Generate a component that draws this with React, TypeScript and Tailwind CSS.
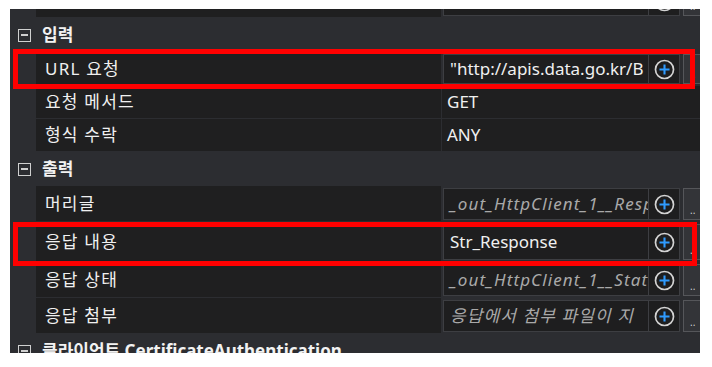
import React from 'react';

type Row =
  | { type: 'cat'; label: string; h: number }
  | {
      type: 'prop';
      label: string;
      value: string;
      h: number;
      boxed?: boolean;
      italic?: boolean;
    };

const rows: Row[] = [
  { type: 'prop', label: '사용자 정의', value: '', h: 34, boxed: true },
  { type: 'cat', label: '입력', h: 34 },
  { type: 'prop', label: 'URL 요청', value: '"http://apis.data.go.kr/B', h: 34, boxed: true },
  { type: 'prop', label: '요청 메서드', value: 'GET', h: 33 },
  { type: 'prop', label: '형식 수락', value: 'ANY', h: 33 },
  { type: 'cat', label: '출력', h: 34 },
  { type: 'prop', label: '머리글', value: '_out_HttpClient_1__Resp', h: 36, boxed: true, italic: true },
  { type: 'prop', label: '응답 내용', value: 'Str_Response', h: 40, boxed: true },
  { type: 'prop', label: '응답 상태', value: '_out_HttpClient_1__Stat', h: 36, boxed: true, italic: true },
  { type: 'prop', label: '응답 첨부', value: '응답에서 첨부 파일이 지', h: 36, boxed: true, italic: true },
  { type: 'cat', label: '클라이언트 CertificateAuthentication', h: 34 },
];

function PlusIcon() {
  return (
    <svg width="21" height="21" viewBox="0 0 20 20">
      <circle cx="10" cy="10" r="8.6" fill="none" stroke="#d4d4d4" strokeWidth="1.6" />
      <path d="M10 5.2v9.6M5.2 10h9.6" stroke="#2f9bff" strokeWidth="2" />
    </svg>
  );
}

function CollapseIcon() {
  return (
    <div className="w-[13px] h-[13px] border-[1.5px] border-[#d0d0d0] flex items-center justify-center shrink-0">
      <div className="w-[7px] h-[1.5px] bg-[#d0d0d0]" />
    </div>
  );
}

export default function App() {
  return (
    <div className="w-[712px] h-[367px] bg-white pt-[9px] pl-[10px] relative font-['Noto_Sans','Noto_Sans_CJK_KR',sans-serif]">
      <div className="w-[690px] h-[344px] bg-[#2c2d31] overflow-hidden flex flex-col">
        {rows.map((row, i) => {
          const first = i === 0;
          if (row.type === 'cat') {
            return (
              <div
                key={i}
                className="flex items-center pl-[8px] gap-[11px] shrink-0 text-[17px] font-bold text-[#f2f2f2] whitespace-nowrap"
                style={{ height: row.h }}
              >
                <CollapseIcon />
                <span>{row.label}</span>
              </div>
            );
          }
          return (
            <div
              key={i}
              className={`flex shrink-0 pl-[26px] ${first ? '-mt-[25px]' : ''}`}
              style={{ height: row.h }}
            >
              <div className="w-[405px] shrink-0 bg-[#1f1f20] mb-px flex items-center pl-[9px] text-[17px] text-[#f0f0f0] tracking-[1.2px] whitespace-nowrap">
                {row.label}
              </div>
              <div className="w-px shrink-0" />
              {row.boxed ? (
                <div className="flex-1 flex items-stretch py-[2px] pl-px overflow-hidden">
                  <div
                    className={`w-[206px] shrink-0 border border-[#3d3e42] bg-[#1e1e1f] flex items-center pl-[6px] overflow-hidden whitespace-nowrap text-[17px] ${
                      row.italic ? 'italic text-[#a9a9a9] tracking-[1.1px]' : 'text-[#f0f0f0]'
                    }`}
                  >
                    {row.value}
                  </div>
                  <div className="w-[31px] shrink-0 border border-l-0 border-[#3d3e42] bg-[#1e1e1f] flex items-center justify-center">
                    <PlusIcon />
                  </div>
                  <div className="ml-[3px] w-[30px] shrink-0 border border-[#55565a] bg-[#333438] flex items-end pl-[6px] pb-[4px] text-[10px] leading-none text-[#cfcfcf]">
                    ..
                  </div>
                </div>
              ) : (
                <div className="flex-1 bg-[#1f1f20] mb-px flex items-center pl-[5px] text-[17px] text-[#f0f0f0]">
                  {row.value}
                </div>
              )}
            </div>
          );
        })}
      </div>

      {/* red highlight boxes */}
      <div className="absolute left-[13px] top-[49px] w-[682px] h-[40px] border-[5px] border-[#ff0000]" />
      <div className="absolute left-[13px] top-[222px] w-[684px] h-[44px] border-[5px] border-[#ff0000]" />
    </div>
  );
}
